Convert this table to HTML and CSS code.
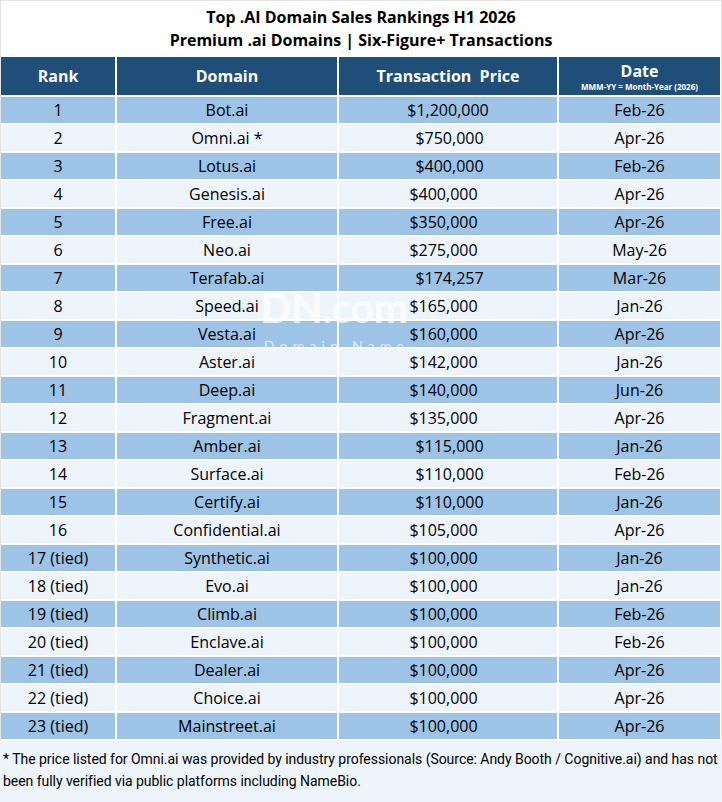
FILE: index.html
```html
<!DOCTYPE html>
<html lang="en">
<head>
<meta charset="utf-8">
<title>Top .AI Domain Sales Rankings H1 2026</title>
<link rel="stylesheet" href="styles.css">
</head>
<body>
<div class="frame">
  <div class="title">
    <div>Top .AI Domain Sales Rankings H1 2026</div>
    <div>Premium .ai Domains | Six-Figure+ Transactions</div>
  </div>
  <div class="table">
    <div class="row head">
      <div class="cell">Rank</div>
      <div class="cell">Domain</div>
      <div class="cell pre">Transaction  Price</div>
      <div class="cell date-head"><span class="dh">Date</span><span class="dsub">MMM-YY = Month-Year (2026)</span></div>
    </div>
    <div class="row dark"><div class="cell">1</div><div class="cell">Bot.ai</div><div class="cell">$1,200,000</div><div class="cell">Feb-26</div></div>
    <div class="row light"><div class="cell">2</div><div class="cell">Omni.ai *</div><div class="cell pb">$750,000</div><div class="cell">Apr-26</div></div>
    <div class="row dark"><div class="cell">3</div><div class="cell">Lotus.ai</div><div class="cell pb">$400,000</div><div class="cell">Feb-26</div></div>
    <div class="row light"><div class="cell">4</div><div class="cell">Genesis.ai</div><div class="cell pa">$400,000</div><div class="cell">Apr-26</div></div>
    <div class="row dark"><div class="cell">5</div><div class="cell">Free.ai</div><div class="cell pa">$350,000</div><div class="cell">Apr-26</div></div>
    <div class="row light"><div class="cell">6</div><div class="cell">Neo.ai</div><div class="cell pa">$275,000</div><div class="cell">May-26</div></div>
    <div class="row dark"><div class="cell">7</div><div class="cell">Terafab.ai</div><div class="cell pb">$174,257</div><div class="cell">Mar-26</div></div>
    <div class="row light"><div class="cell">8</div><div class="cell">Speed.ai</div><div class="cell pa">$165,000</div><div class="cell">Jan-26</div></div>
    <div class="row dark"><div class="cell">9</div><div class="cell">Vesta.ai</div><div class="cell pa">$160,000</div><div class="cell">Apr-26</div></div>
    <div class="row light"><div class="cell">10</div><div class="cell">Aster.ai</div><div class="cell pa">$142,000</div><div class="cell">Jan-26</div></div>
    <div class="row dark"><div class="cell">11</div><div class="cell">Deep.ai</div><div class="cell pa">$140,000</div><div class="cell">Jun-26</div></div>
    <div class="row light"><div class="cell">12</div><div class="cell">Fragment.ai</div><div class="cell pa">$135,000</div><div class="cell">Apr-26</div></div>
    <div class="row dark"><div class="cell">13</div><div class="cell">Amber.ai</div><div class="cell pb">$115,000</div><div class="cell">Jan-26</div></div>
    <div class="row light"><div class="cell">14</div><div class="cell">Surface.ai</div><div class="cell pb">$110,000</div><div class="cell">Feb-26</div></div>
    <div class="row dark"><div class="cell">15</div><div class="cell">Certify.ai</div><div class="cell pb">$110,000</div><div class="cell">Jan-26</div></div>
    <div class="row light"><div class="cell">16</div><div class="cell">Confidential.ai</div><div class="cell pa">$105,000</div><div class="cell">Apr-26</div></div>
    <div class="row dark"><div class="cell">17 (tied)</div><div class="cell">Synthetic.ai</div><div class="cell pa">$100,000</div><div class="cell">Jan-26</div></div>
    <div class="row light"><div class="cell">18 (tied)</div><div class="cell">Evo.ai</div><div class="cell pa">$100,000</div><div class="cell">Jan-26</div></div>
    <div class="row dark"><div class="cell">19 (tied)</div><div class="cell">Climb.ai</div><div class="cell pa">$100,000</div><div class="cell">Feb-26</div></div>
    <div class="row light"><div class="cell">20 (tied)</div><div class="cell">Enclave.ai</div><div class="cell pa">$100,000</div><div class="cell">Feb-26</div></div>
    <div class="row dark"><div class="cell">21 (tied)</div><div class="cell">Dealer.ai</div><div class="cell pa">$100,000</div><div class="cell">Apr-26</div></div>
    <div class="row light"><div class="cell">22 (tied)</div><div class="cell">Choice.ai</div><div class="cell pa">$100,000</div><div class="cell">Apr-26</div></div>
    <div class="row dark"><div class="cell">23 (tied)</div><div class="cell">Mainstreet.ai</div><div class="cell pa">$100,000</div><div class="cell">Apr-26</div></div>
    <div class="watermark">
      <div class="wm-big">DN.com</div>
      <div class="wm-small">Domain Name</div>
    </div>
  </div>
  <div class="footer">
    <p>* The price listed for Omni.ai was provided by industry professionals (Source: Andy Booth / Cognitive.ai) and has not been fully verified via public platforms including NameBio.</p>
  </div>
</div>
</body>
</html>
```
FILE: styles.css
```css
html, body {
  margin: 0;
  padding: 0;
  background: #ffffff;
}
body {
  font-family: "Open Sans", "Noto Sans", sans-serif;
  color: #000;
}
.frame {
  width: 720px;
  height: 801px;
  border-top: 1px solid #e4e4e4;
  border-left: 1px solid #e4e4e4;
  border-right: 1px solid #e4e4e4;
  background: #ffffff;
  display: flex;
  flex-direction: column;
}
.title {
  height: 54px;
  box-sizing: border-box;
  padding-top: 5px;
  text-align: center;
  font-weight: 700;
  font-size: 16px;
  line-height: 23px;
  margin-bottom: 2px;
}
.table {
  position: relative;
  display: flex;
  flex-direction: column;
  gap: 2px;
  width: 719px;
}
.row {
  display: grid;
  grid-template-columns: 114px 220px 218px 161px;
  column-gap: 2px;
  height: 26px;
}
.cell {
  display: flex;
  align-items: center;
  justify-content: center;
  font-size: 16px;
  white-space: nowrap;
}
.pre { white-space: pre; }
.pa { padding-right: 9px; }
.pb { padding-left: 3px; }
.row.head {
  height: 38px;
}
.head .cell {
  background: #1f4e79;
  color: #ffffff;
  font-weight: 700;
  font-size: 16px;
}
.date-head {
  flex-direction: column;
}
.dh {
  line-height: 20px;
  margin-top: 1px;
}
.dsub {
  font-size: 8px;
  line-height: 11px;
  font-weight: 700;
}
.dark .cell { background: #9dc3e6; }
.light .cell { background: #edf4fb; }
.watermark {
  position: absolute;
  left: 258px;
  top: 229px;
  width: 150px;
  text-align: center;
  color: rgba(255, 255, 255, 0.72);
  pointer-events: none;
}
.wm-big {
  font-family: "Lato", sans-serif;
  font-weight: 900;
  font-size: 41px;
  line-height: 44px;
  letter-spacing: -0.5px;
}
.wm-small {
  font-family: "Lato", sans-serif;
  font-size: 14px;
  line-height: 16px;
  letter-spacing: 5.2px;
  margin-top: 8px;
  margin-right: -5px;
}
.footer {
  flex: 1;
  margin-top: 2px;
  margin-left: -1px;
  margin-right: -1px;
  background: #edf4fb;
  padding: 7px 2px 0 3px;
}
.footer p {
  margin: 0;
  font-family: "Roboto", sans-serif;
  font-size: 14px;
  line-height: 22px;
  letter-spacing: -0.04px;
}
```
